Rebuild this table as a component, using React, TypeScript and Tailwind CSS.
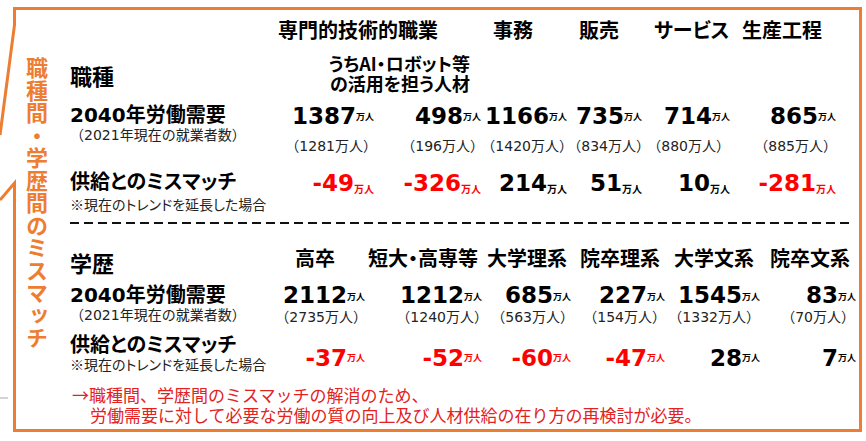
import clsx from 'clsx';

type Demand = { v: string; sub: string; subCls: string };

const topCols = 'grid grid-cols-[210px_94px_107px_86px_75px_88px_106px]';
const eduCols = 'grid grid-cols-[210px_85px_117px_89px_94px_95px_96px]';
const digits = "font-['DejaVu_Sans','Noto_Sans_CJK_JP',sans-serif]";
const wide = '[font-feature-settings:normal]';
// half-width parentheses so the box matches the ink
const tight = "[font-feature-settings:'halt']";

const jobHeads = ['事務', '販売', 'サービス', '生産工程'];

const jobDemand: Demand[] = [
  { v: '1387', sub: '1281', subCls: 'mr-[4px]' },
  { v: '498', sub: '196', subCls: 'mr-[4px]' },
  { v: '1166', sub: '1420', subCls: 'mr-[1px]' },
  { v: '735', sub: '834', subCls: '-mr-[1px]' },
  { v: '714', sub: '880', subCls: 'mr-[7px]' },
  { v: '865', sub: '885', subCls: 'mr-[6px]' }
];

const jobGap = ['-49', '-326', '214', '51', '10', '-281'];

const eduHeads = [
  { t: '高卒', cls: 'pl-[15px]' },
  { t: '短大・高専等', cls: 'pl-[3px]' },
  { t: '大学理系', cls: 'pl-[5px]' },
  { t: '院卒理系', cls: 'pl-[9px]' },
  { t: '大学文系', cls: 'pl-[9px]' },
  { t: '院卒文系', cls: 'pl-[10px]' }
];

const eduDemand: Demand[] = [
  { v: '2112', sub: '2735', subCls: 'mr-[5px]' },
  { v: '1212', sub: '1240', subCls: 'mr-[1px]' },
  { v: '685', sub: '563', subCls: 'mr-[4px]' },
  { v: '227', sub: '154', subCls: 'mr-[6px]' },
  { v: '1545', sub: '1332', subCls: 'mr-[7px]' },
  { v: '83', sub: '70', subCls: 'mr-[8px]' }
];

const eduGap = ['-37', '-52', '-60', '-47', '28', '7'];

function Num({ v, unitCls }: { v: string; unitCls: string }) {
  return (
    <div
      className={clsx(
        'flex items-start justify-end font-bold',
        v.startsWith('-') ? 'text-[#ff0000]' : 'text-black'
      )}
    >
      <span className={clsx(digits, 'text-[23px] leading-[25px]')}>{v}</span>
      <span className={clsx('leading-none', unitCls)}>万人</span>
    </div>
  );
}

function RowLabel({ title, note, titleCls }: { title: string; note: string; titleCls?: string }) {
  return (
    <div className={titleCls}>
      <div className={clsx(digits, 'text-[20px] font-bold leading-[22px]')}>{title}</div>
      <div className={clsx(digits, wide, 'whitespace-nowrap text-[14px] leading-[18px] text-[#222]')}>{note}</div>
    </div>
  );
}

const App = () => {
  return (
    <div className="relative h-[441px] w-[866px] overflow-hidden bg-white font-['Noto_Sans_CJK_JP',sans-serif] text-black [font-feature-settings:'palt']">
      <div className="relative ml-[13px] mt-[7px] flex h-[425px] w-[849px] border-y-[3px] border-r-[3px] border-[#ED7D31]">
        {/* left edge of the callout with its pointer */}
        <svg className="absolute -left-[13px] -top-[3px]" width="18" height="425" viewBox="0 0 18 425">
          <polyline points="14.5,0 14.5,18 0,128" fill="none" stroke="#ED7D31" strokeWidth="3" />
          <polyline points="0,193 14.5,176 14.5,425" fill="none" stroke="#ED7D31" strokeWidth="3" />
          <line x1="0" y1="391" x2="8" y2="391" stroke="#a8a8a8" strokeWidth="1" />
        </svg>

        <p className="ml-[12px] mt-[47px] h-[300px] text-[22px] font-bold leading-[23px] tracking-[0.5px] text-[#ED7D31] [font-feature-settings:normal] [writing-mode:vertical-rl]">
          職種間・学歴間のミスマッチ
        </p>

        <div className="ml-[22px] flex flex-col pt-[10px]">
          {/* occupations */}
          <div className={clsx(topCols, 'h-[20px] whitespace-nowrap text-[20px] font-bold leading-[20px]')}>
            <div />
            <div className="col-span-2 -ml-[2px]">専門的技術的職業</div>
            {jobHeads.map(h => (
              <div key={h} className="pl-3">
                {h}
              </div>
            ))}
          </div>

          <div className={clsx(topCols, 'mt-[13px]')}>
            <div className="pt-[11px] text-[22px] font-bold leading-[22px]">職種</div>
            <div className="col-span-2 whitespace-nowrap pr-[11px] text-right text-[18px] font-bold leading-[20px]">
              <div>うちAI・ロボット等</div>
              <div>の活用を担う人材</div>
            </div>
          </div>

          <div className={clsx(topCols, 'mt-[11px]')}>
            <RowLabel title="2040年労働需要" note="（2021年現在の就業者数）" />
            {jobDemand.map(d => (
              <div key={d.v} className="flex flex-col items-end">
                <Num v={d.v} unitCls="mt-[8px] text-[9px]" />
                <div className={clsx(digits, tight, 'mt-[9px] whitespace-nowrap text-[14px] leading-[16px] text-[#222]', d.subCls)}>
                  （{d.sub}万人）
                </div>
              </div>
            ))}
          </div>

          <div className={clsx(topCols, 'mt-[16px]')}>
            <div>
              <div className="text-[20px] font-bold leading-[22px]">供給とのミスマッチ</div>
              <div className="mt-[3px] whitespace-nowrap text-[14px] leading-[18px] text-[#222]">※現在のトレンドを延長した場合</div>
            </div>
            {jobGap.map(v => (
              <div key={v} className="pt-[1px]">
                <Num v={v} unitCls="mt-[13px] text-[10px]" />
              </div>
            ))}
          </div>

          <div className="mt-[9px] h-[2px] w-[780px] bg-[repeating-linear-gradient(90deg,#111_0_9px,transparent_9px_14px)]" />

          {/* education */}
          <div className={clsx(eduCols, 'mt-[24px] whitespace-nowrap font-bold')}>
            <div className="pt-[3px] text-[22px] leading-[22px]">学歴</div>
            {eduHeads.map(h => (
              <div key={h.t} className={clsx('text-[20px] leading-[20px]', h.cls)}>
                {h.t}
              </div>
            ))}
          </div>

          <div className={clsx(eduCols, 'mt-[10px]')}>
            <RowLabel title="2040年労働需要" note="（2021年現在の就業者数）" titleCls="pt-[1px]" />
            {eduDemand.map(d => (
              <div key={d.v} className="flex flex-col items-end">
                <Num v={d.v} unitCls="mt-[9px] text-[9px]" />
                <div className={clsx(digits, tight, 'mt-[1px] whitespace-nowrap text-[14px] leading-[16px] text-[#222]', d.subCls)}>
                  （{d.sub}万人）
                </div>
              </div>
            ))}
          </div>

          <div className={clsx(eduCols, 'mt-[8px]')}>
            <div>
              <div className="text-[20px] font-bold leading-[22px]">供給とのミスマッチ</div>
              <div className="whitespace-nowrap text-[14px] leading-[18px] text-[#222]">※現在のトレンドを延長した場合</div>
            </div>
            {eduGap.map(v => (
              <div key={v} className="pt-[13px]">
                <Num v={v} unitCls="mt-[7px] text-[9px]" />
              </div>
            ))}
          </div>

          <div className="mt-[12px] whitespace-nowrap pl-[2px] text-[17px] leading-[20px] text-[#e32222] [font-feature-settings:normal]">
            <div>→職種間、学歴間のミスマッチの解消のため、</div>
            <div className="pl-[18px]">労働需要に対して必要な労働の質の向上及び人材供給の在り方の再検討が必要。</div>
          </div>
        </div>
      </div>
    </div>
  );
};

export default App;
